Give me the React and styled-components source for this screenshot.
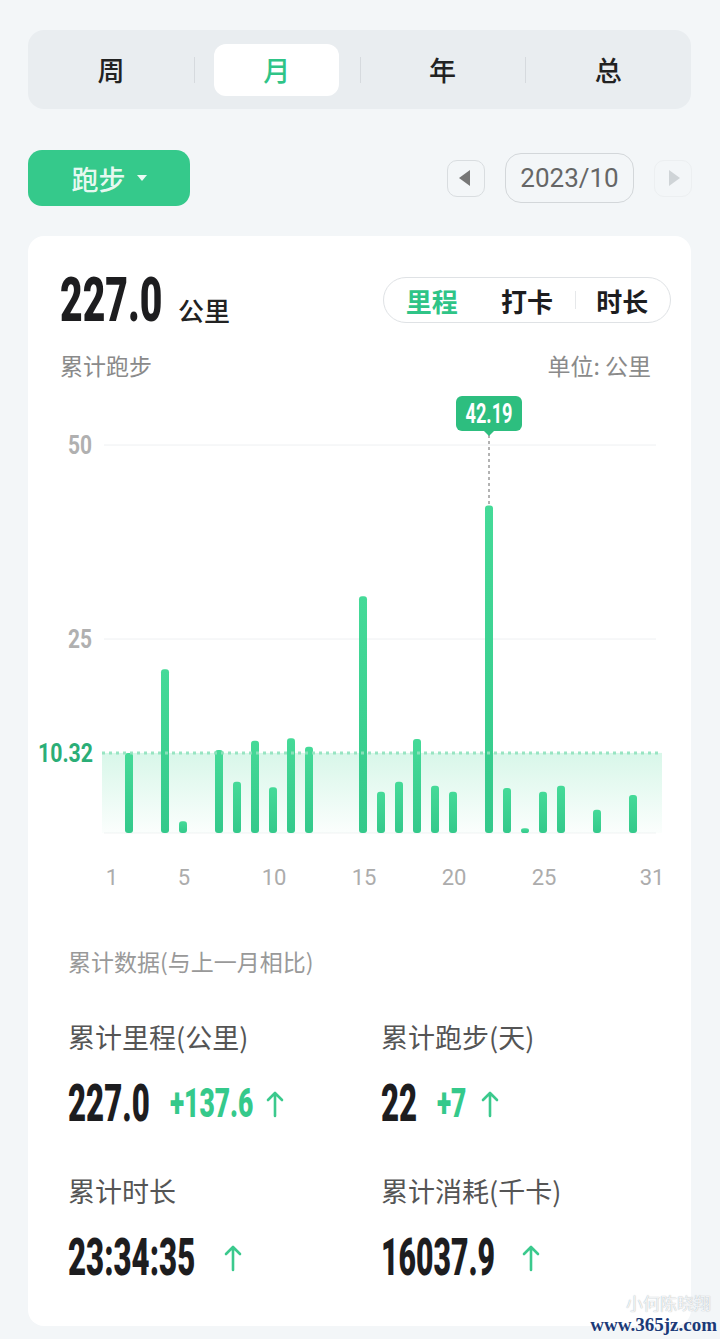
import React from "react"
import styled, { createGlobalStyle } from "styled-components"

const GREEN = "#2fc487"

const GlobalStyle = createGlobalStyle`
  body {
    margin: 0;
    background: #f3f6f8;
    font-family: "Noto Sans CJK SC", "Noto Sans", sans-serif;
  }
`

const Page = styled.div`
  position: relative;
  min-height: 1339px;
  box-sizing: border-box;
  padding: 30px 29px 14px 28px;
`

const Segments = styled.div`
  display: grid;
  grid-template-columns: repeat(4, 1fr);
  height: 79px;
  background: #e9edf0;
  border-radius: 16px;
`

const Seg = styled.div`
  position: relative;
  display: flex;
  align-items: center;
  justify-content: center;
  & + &::before {
    content: "";
    position: absolute;
    left: 0;
    top: 27px;
    width: 1px;
    height: 26px;
    background: #d6dade;
  }
`

const SegLabel = styled.span`
  width: 125px;
  height: 52px;
  border-radius: 12px;
  display: flex;
  align-items: center;
  justify-content: center;
  font-size: 27px;
  font-weight: 500;
  color: ${p => (p.$active ? GREEN : "#222")};
  background: ${p => (p.$active ? "#fff" : "transparent")};
`

const Toolbar = styled.div`
  display: flex;
  justify-content: space-between;
  align-items: center;
  margin-top: 41px;
  height: 56px;
`

const SportButton = styled.button`
  width: 162px;
  height: 56px;
  padding: 0;
  border: 0;
  border-radius: 14px;
  background: #35c98b;
  color: rgba(255, 255, 255, 0.9);
  font: 500 27px "Noto Sans CJK SC", sans-serif;
  display: flex;
  align-items: center;
  justify-content: center;
  gap: 11px;
`

const Caret = styled.span`
  width: 0;
  height: 0;
  border-left: 5px solid transparent;
  border-right: 5px solid transparent;
  border-top: 6px solid rgba(255, 255, 255, 0.9);
`

const DateNav = styled.div`
  display: flex;
  align-items: center;
  gap: 20px;
  margin-right: -1px;
`

const ArrowBox = styled.button`
  width: 38px;
  height: 37px;
  padding: 0;
  box-sizing: border-box;
  background: transparent;
  border: 1px solid ${p => (p.$disabled ? "#eceff1" : "#d9dde0")};
  border-radius: 10px;
  display: flex;
  align-items: center;
  justify-content: center;
`

const Tri = styled.span`
  width: 0;
  height: 0;
  border-top: 8px solid transparent;
  border-bottom: 8px solid transparent;
  ${p =>
    p.$dir === "left"
      ? `border-right: 11px solid #777; margin-right: 3px;`
      : `border-left: 11px solid #cfd4d7; margin-left: 3px;`}
`

const DateBox = styled.div`
  width: 129px;
  height: 50px;
  box-sizing: border-box;
  border: 1px solid #d3d7da;
  border-radius: 16px;
  display: flex;
  align-items: center;
  justify-content: center;
  font: 400 26px Roboto, "Liberation Sans", sans-serif;
  color: #666;
`

const Card = styled.div`
  margin-top: 30px;
  background: #fff;
  border-radius: 16px;
  padding: 40px 0 43px;
`

const Header = styled.div`
  display: flex;
  justify-content: space-between;
  align-items: center;
  height: 48px;
  padding: 0 20px 0 32px;
`

const Total = styled.div`
  display: flex;
  align-items: baseline;
  gap: 16px;
`

const Unit = styled.span`
  font-size: 26px;
  font-weight: 500;
  color: #222;
`

const NumBox = styled.span`
  display: inline-block;
  width: ${p => p.$w}px;
  white-space: nowrap;
  line-height: 1;
`

const NumText = styled.span`
  display: inline-block;
  font-family: Roboto, "Liberation Sans", sans-serif;
  font-weight: 900;
  font-size: ${p => p.$size}px;
  color: ${p => p.$color || "#1d1d1f"};
  transform: scaleX(${p => p.$sx});
  transform-origin: left center;
`

const Num = ({ w, size, color, sx = 0.63, children }) => (
  <NumBox $w={w}>
    <NumText $size={size} $color={color} $sx={sx}>
      {children}
    </NumText>
  </NumBox>
)

const MetricSwitch = styled.div`
  display: grid;
  grid-template-columns: repeat(3, 1fr);
  width: 288px;
  height: 46px;
  box-sizing: border-box;
  border: 1px solid #dfe2e5;
  border-radius: 23px;
`

const MetricItem = styled.div`
  position: relative;
  display: flex;
  align-items: center;
  justify-content: center;
  font-size: 26px;
  font-weight: 700;
  color: ${p => (p.$active ? GREEN : "#1d1d1f")};
  & + &::before {
    content: "";
    position: absolute;
    left: 0;
    top: 13px;
    width: 1px;
    height: 18px;
    background: #e6e8ea;
  }
`

const SubRow = styled.div`
  display: flex;
  justify-content: space-between;
  margin-top: 25px;
  padding: 0 40px 0 32px;
  font-size: 23px;
  line-height: 32px;
  color: #8a8a8a;
`

const ChartSvg = styled.svg`
  display: block;
  margin-top: 8px;
`

const Stats = styled.div`
  padding: 0 40px;
  margin-top: 47px;
`

const StatsTitle = styled.div`
  font-size: 23px;
  line-height: 30px;
  color: #999;
`

const StatsGrid = styled.div`
  display: grid;
  grid-template-columns: 313px 1fr;
  row-gap: 45px;
  margin-top: 44px;
`

const Cell = styled.div`
  display: flex;
  flex-direction: column;
  gap: 25px;
`

const CellLabel = styled.div`
  font-size: 27px;
  line-height: 34px;
  color: #555;
`

const ValueRow = styled.div`
  display: flex;
  align-items: center;
  height: 50px;
  gap: ${p => p.$gap}px;
`

const Watermark = styled.div`
  position: absolute;
  right: 3px;
  bottom: 4px;
  display: flex;
  flex-direction: column;
  align-items: flex-end;
  gap: 3px;
  line-height: 1;
`

const WmCn = styled.span`
  font-size: 17px;
  color: rgba(255, 255, 255, 0.85);
  text-shadow: 0 0 1px #9aa4ad;
  margin-right: 6px;
`

const WmUrl = styled.span`
  font: 700 19px "Liberation Serif", serif;
  color: #1c3a78;
  text-shadow: 0 0 2px #fff;
`

const UpArrow = () => (
  <svg width="18" height="28" viewBox="0 0 18 28" fill="none">
    <path d="M9 26V3M2 10l7-7 7 7" stroke="#3bc98d" strokeWidth="2.6" strokeLinecap="round" strokeLinejoin="round" />
  </svg>
)

const runs = {
  2: 10.3, 4: 21.1, 5: 1.5, 7: 10.7, 8: 6.6, 9: 11.9, 10: 5.9, 11: 12.2, 12: 11.1,
  15: 30.5, 16: 5.3, 17: 6.6, 18: 12.1, 19: 6.1, 20: 5.3, 22: 42.19, 23: 5.8,
  24: 0.6, 25: 5.3, 26: 6.1, 28: 3.0, 30: 4.9,
}

const BASE = 444
const PER = 7.76
const dayX = d => 155 + (d - 5) * 18

const Chart = () => {
  const avgY = BASE - 10.32 * PER
  const peakX = dayX(22)
  const peakY = BASE - 42.19 * PER
  return (
    <ChartSvg width="663" height="510" viewBox="0 0 663 510">
      <defs>
        <linearGradient id="avgArea" x1="0" y1="0" x2="0" y2="1">
          <stop offset="0" stopColor="#3dd692" stopOpacity="0.2" />
          <stop offset="1" stopColor="#3dd692" stopOpacity="0.02" />
        </linearGradient>
        <linearGradient id="bar" x1="0" y1="0" x2="0" y2="1">
          <stop offset="0" stopColor="#45da98" />
          <stop offset="1" stopColor="#34c98b" />
        </linearGradient>
      </defs>
      <line x1="76" x2="628" y1="56" y2="56" stroke="#eef0f2" />
      <line x1="76" x2="628" y1="250" y2="250" stroke="#eef0f2" />
      <line x1="76" x2="628" y1={BASE} y2={BASE} stroke="#f1f3f4" />
      <text x="64" y="65" textAnchor="end" fontFamily="Roboto, sans-serif" fontWeight="700" fontSize="25" fill="#b0b0b0" textLength="24" lengthAdjust="spacingAndGlyphs">50</text>
      <text x="64" y="259" textAnchor="end" fontFamily="Roboto, sans-serif" fontWeight="700" fontSize="25" fill="#b0b0b0" textLength="24" lengthAdjust="spacingAndGlyphs">25</text>
      <rect x="74" y={avgY} width="560" height={BASE - avgY} fill="url(#avgArea)" />
      {Object.entries(runs).map(([d, v]) => (
        <rect key={d} x={dayX(+d) - 4} y={BASE - v * PER} width="8" height={v * PER} rx="3" fill="url(#bar)" />
      ))}
      <line x1="74" x2="634" y1={avgY} y2={avgY} stroke="#8fe3bd" strokeWidth="3" strokeDasharray="3 4" opacity="0.9" />
      <text x="65" y={avgY + 9} textAnchor="end" fontFamily="Roboto, sans-serif" fontWeight="700" fontSize="26" fill="#2bae77" textLength="55" lengthAdjust="spacingAndGlyphs">10.32</text>
      <line x1={peakX} x2={peakX} y1="46" y2={peakY} stroke="#666" strokeWidth="1" strokeDasharray="3 3" />
      <rect x={peakX - 33} y="7" width="66" height="35" rx="6" fill="#2dbe7f" />
      <path d={`M${peakX - 5} 42 L${peakX} 47 L${peakX + 5} 42 Z`} fill="#2dbe7f" />
      <text x={peakX} y="34" textAnchor="middle" fontFamily="Roboto, sans-serif" fontWeight="700" fontSize="28" fill="#fff" textLength="47" lengthAdjust="spacingAndGlyphs">42.19</text>
      {[1, 5, 10, 15, 20, 25, 31].map(d => (
        <text key={d} x={dayX(d) + 1} y="496" textAnchor="middle" fontFamily="Roboto, sans-serif" fontSize="22" fill="#acacac">{d}</text>
      ))}
    </ChartSvg>
  )
}

const tabs = ["周", "月", "年", "总"]
const metrics = ["里程", "打卡", "时长"]

export default function App() {
  return (
    <Page>
      <GlobalStyle />
      <Segments>
        {tabs.map(t => (
          <Seg key={t}>
            <SegLabel $active={t === "月"}>{t}</SegLabel>
          </Seg>
        ))}
      </Segments>

      <Toolbar>
        <SportButton>
          跑步
          <Caret />
        </SportButton>
        <DateNav>
          <ArrowBox>
            <Tri $dir="left" />
          </ArrowBox>
          <DateBox>2023/10</DateBox>
          <ArrowBox $disabled>
            <Tri $dir="right" />
          </ArrowBox>
        </DateNav>
      </Toolbar>

      <Card>
        <Header>
          <Total>
            <Num w={102} size={62} sx={0.63}>227.0</Num>
            <Unit>公里</Unit>
          </Total>
          <MetricSwitch>
            {metrics.map(m => (
              <MetricItem key={m} $active={m === "里程"}>{m}</MetricItem>
            ))}
          </MetricSwitch>
        </Header>
        <SubRow>
          <span>累计跑步</span>
          <span>单位: 公里</span>
        </SubRow>

        <Chart />

        <Stats>
          <StatsTitle>累计数据(与上一月相比)</StatsTitle>
          <StatsGrid>
            <Cell>
              <CellLabel>累计里程(公里)</CellLabel>
              <ValueRow $gap={12}>
                <Num w={90} size={52} sx={0.6}>227.0</Num>
                <Num w={84} size={40} sx={0.66} color="#35c98b">+137.6</Num>
                <UpArrow />
              </ValueRow>
            </Cell>
            <Cell>
              <CellLabel>累计跑步(天)</CellLabel>
              <ValueRow $gap={10}>
                <Num w={46} size={52} sx={0.6}>22</Num>
                <Num w={34} size={40} sx={0.66} color="#35c98b">+7</Num>
                <UpArrow />
              </ValueRow>
            </Cell>
            <Cell>
              <CellLabel>累计时长</CellLabel>
              <ValueRow $gap={28}>
                <Num w={128} size={52} sx={0.6}>23:34:35</Num>
                <UpArrow />
              </ValueRow>
            </Cell>
            <Cell>
              <CellLabel>累计消耗(千卡)</CellLabel>
              <ValueRow $gap={28}>
                <Num w={113} size={52} sx={0.58}>16037.9</Num>
                <UpArrow />
              </ValueRow>
            </Cell>
          </StatsGrid>
        </Stats>
      </Card>

      <Watermark>
        <WmCn>小何陈晓翔</WmCn>
        <WmUrl>www.365jz.com</WmUrl>
      </Watermark>
    </Page>
  )
}
